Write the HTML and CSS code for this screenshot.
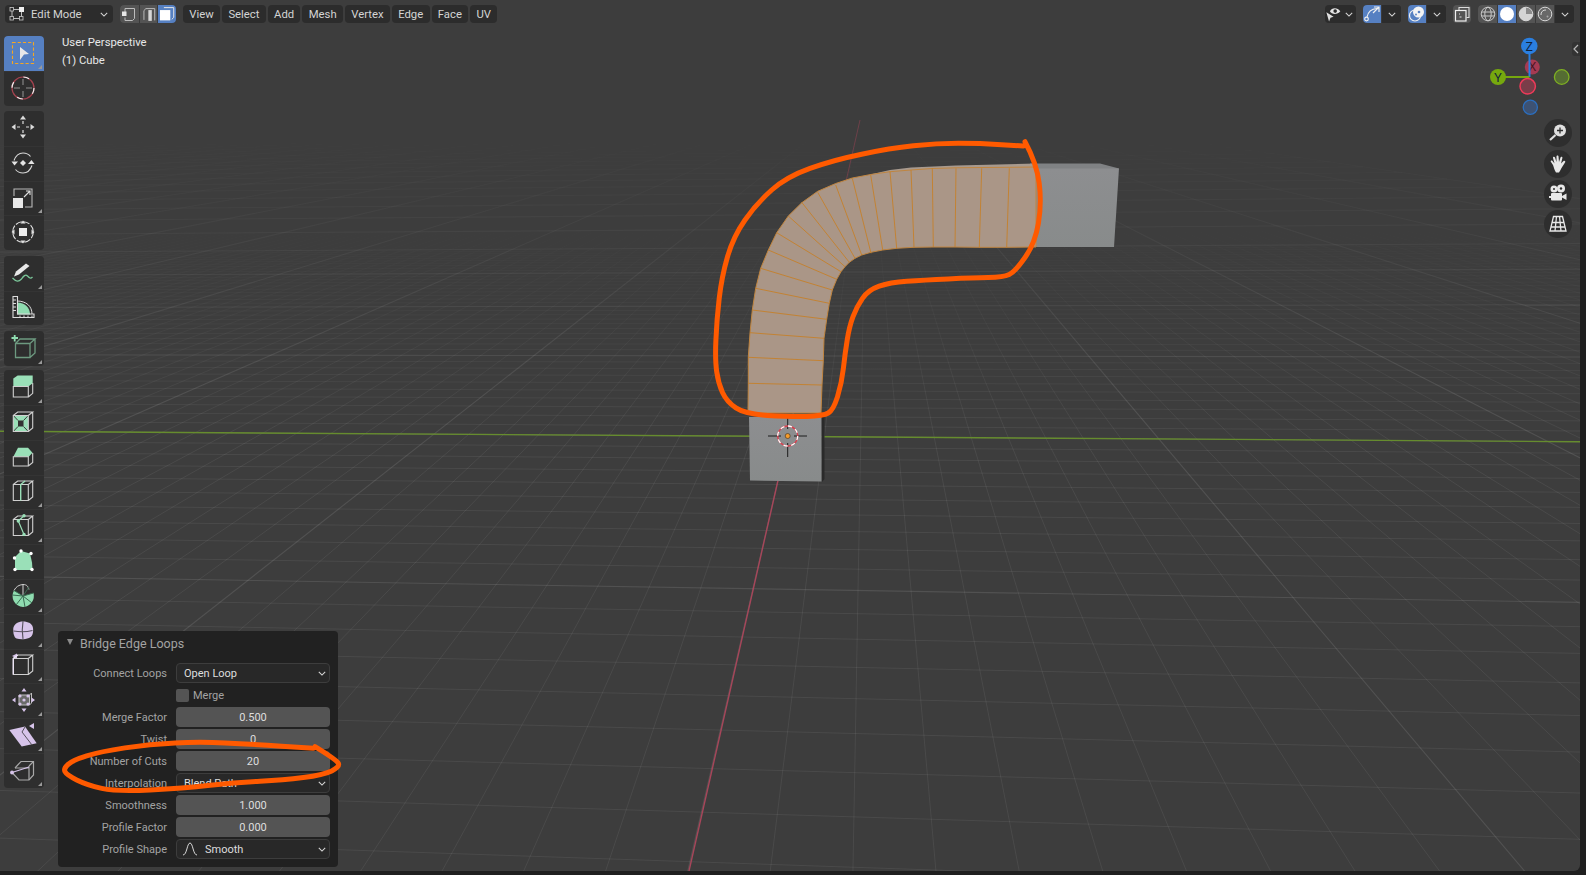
FILE: index.html
```html
<!DOCTYPE html>
<html lang="en">
<head>
<meta charset="utf-8">
<title>Bridge Edge Loops</title>
<link rel="stylesheet" href="styles.css">
</head>
<body>
<svg class="sprite" width="0" height="0" aria-hidden="true">
  <symbol id="chev" viewBox="0 0 10 6"><path d="M1 1l4 4 4-4" fill="none" stroke="#d8d8d8" stroke-width="1.3"/></symbol>
  <symbol id="cube" viewBox="0 0 24 24"><path d="M2.300 5.500h15v16h-15zM2.300 5.500L6.700 2h15l-4.400 3.500M17.300 21.500l4.400-3.500V2" fill="none" stroke="#d0d0d0" stroke-width="1.100"/></symbol>
</svg>
<main class="view">
  <svg class="scene" viewBox="0 0 1580 871" width="1580" height="871">
    <defs>
      <linearGradient id="fadeMinor" gradientUnits="userSpaceOnUse" x1="0" y1="210" x2="0" y2="440">
        <stop offset="0" stop-color="#000"/><stop offset="1" stop-color="#fff"/>
      </linearGradient>
      <linearGradient id="fadeMajor" gradientUnits="userSpaceOnUse" x1="0" y1="135" x2="0" y2="400">
        <stop offset="0" stop-color="#000"/><stop offset="1" stop-color="#fff"/>
      </linearGradient>
      <mask id="maskMinor" maskUnits="userSpaceOnUse" x="0" y="0" width="1580" height="871"><rect width="1580" height="871" fill="url(#fadeMinor)"/></mask>
      <mask id="maskMajor" maskUnits="userSpaceOnUse" x="0" y="0" width="1580" height="871"><rect width="1580" height="871" fill="url(#fadeMajor)"/></mask>
      <linearGradient id="cubeGrey" x1="0" y1="0" x2="0" y2="1"><stop offset="0" stop-color="#8d8e90"/><stop offset="1" stop-color="#888b8b"/></linearGradient>
    </defs>
    <g id="gridMinor" class="grid-minor" mask="url(#maskMinor)"></g>
    <g id="gridMajor" class="grid-major" mask="url(#maskMajor)"></g>
    <line class="axis-green" x1="0" y1="431.250" x2="1580" y2="441.700"/>
    <line class="axis-red-far" x1="787" y1="440" x2="860" y2="120"/>
    <line class="axis-red" x1="689" y1="871" x2="787" y2="441"/>

    <path class="cube-shadow" d="M821 417h3.500v62l-2.500 3z"/>
    <path class="cube-face" d="M749 417h72.500v64.500l-71.500-1z"/>
    <path class="cube-top" d="M1030 163.500h70l19 5-1 1h-88z"/>
    <path class="cube-face" d="M1034 168.500h85l-5 78.500h-80z"/>

    <path class="band-top" d="M870 174.500L890 170 911 167.500 956 165.500 1036 163.500 1036 169 1009 168 956 169 911 171 871 176z"/>
    <path class="band" d="M748 413L748.300 383 748.300 357 750 333 752.300 310 755.700 288.300 760.700 268.300 768.300 250 776.700 232.700 788.300 216 801.700 202.800 817.700 191.300 835.700 183.500 852.300 178 870.700 174.500 890 171.700 911 170 932 168.500 956 167.800 982 167.500 1009 167.300 1036 167 1036 247 1007 247.300 979 247.300 955 247 933 247 914 247.300 896.700 248.300 882.700 250 871 252.300 861.700 255 855 258.300 849.300 262.300 845 266.700 841 271.700 836.700 279.300 832.300 290 829.300 303.300 826.700 319.300 824 338.300 823.300 360.700 822 385 821 413Z"/>
    <path class="ribs" d="M748.300 383.300L822 385M748.300 357.300L823.300 360.700M750 332.700L824 338.300M752.300 310L826.700 319.300M755.700 288.300L829.300 303.300M760.700 268.300L832.300 290M768.300 250L836.700 279.300M776.700 232.700L841 271.700M788.300 216L845 266.700M801.700 202.300L849.300 262.300M817.700 192.300L855 258.300M835.700 185L861.700 255M852.300 178.300L871 253.300M870.700 175L882.700 250M890 171.700L896.700 248.300M911 170L914 247.300M932.300 168.300L933.300 247M956 168.300L955 247M981.700 168.300L979.300 247.300M1009.300 168.300L1006.700 247.300"/>

    <g class="cursor3d">
      <path class="cross" d="M768 436h13M794 436h13M787.700 415v14M787.700 443v14"/>
      <circle class="ring-red" cx="787.700" cy="436" r="10"/>
      <circle class="ring-white" cx="787.700" cy="436" r="10"/>
      <circle class="origin-dot" cx="787.700" cy="436" r="2.500"/>
    </g>
    <path class="ink" d="M1025 141.700Q1036.700 163.300 1039.200 183.300Q1041.700 203.300 1038.400 223.300Q1035 243.300 1025 257.500Q1015 271.700 1009.200 274.500Q1003.300 277.300 988.300 277.500Q973.300 277.700 948.300 278.900Q923.300 280 906.700 281.200Q890 282.300 879.200 286.200Q868.300 290 862.500 298.400Q856.700 306.700 853 316.700Q849.300 326.700 847.200 340Q845 353.300 843.400 368.300Q841.700 383.300 837.500 396.700Q833.300 410 828.300 413Q823.300 416 806.700 416.400Q790 416.700 767.500 415.400Q745 414 735.900 407.900Q726.700 401.700 722.500 392.500Q718.300 383.300 716.700 371.700Q715 360 715.900 340Q716.700 320 719.200 298.400Q721.700 276.700 727.500 256.700Q733.300 236.700 745 220Q756.700 203.300 771.700 190Q786.700 176.700 810 168.400Q833.300 160 861.700 154.200Q890 148.300 913.400 145.800Q936.700 143.300 958.400 143.300Q980 143.300 1001.700 144.700L1023.300 146"/>
  </svg>

  <div class="ui">
    <header class="topbar">
      <div class="btn mode">
        <svg class="ic" viewBox="0 0 16 16" width="16" height="16"><path d="M3 3.500h7M3 3.500v9M3 12.500h9M12.500 6v6" fill="none" stroke="#bdbdbd"/><rect x="1" y="1.500" width="3.500" height="3.500" fill="#2c2c2c" stroke="#c8c8c8" stroke-width=".8"/><rect x="1" y="10.500" width="3.500" height="3.500" fill="#2c2c2c" stroke="#c8c8c8" stroke-width=".8"/><rect x="10.500" y="10.500" width="3.500" height="3.500" fill="#2c2c2c" stroke="#c8c8c8" stroke-width=".8"/><rect x="10" y="1" width="5" height="5" fill="#efefef"/></svg>
        <span class="mode-label">Edit Mode</span>
        <svg class="chev" width="8" height="5"><use href="#chev"/></svg>
      </div>
      <div class="seg selmode">
        <span class="seg-i grey"><svg viewBox="0 0 18 18" width="18" height="18"><path d="M5 3.500h9.500v10l-2 2H5v-3M5 7V3.500" fill="none" stroke="#bdbdbd"/><rect x="2" y="6.500" width="4.500" height="4.500" fill="#e8e8e8"/></svg></span>
        <span class="seg-i grey"><svg viewBox="0 0 18 18" width="18" height="18"><path d="M4 15V5.500l2-2h9v12" fill="none" stroke="#bdbdbd"/><rect x="8.500" y="5" width="3.500" height="11" fill="#d8d8d8"/></svg></span>
        <span class="seg-i blue"><svg viewBox="0 0 18 18" width="18" height="18"><path d="M6 2.500h10v10l-2 2" fill="none" stroke="#e8e8e8"/><rect x="2" y="5" width="10.500" height="10.500" fill="#fff"/></svg></span>
      </div>
      <nav class="menus">
        <span class="btn menu">View</span><span class="btn menu">Select</span><span class="btn menu">Add</span><span class="btn menu">Mesh</span><span class="btn menu">Vertex</span><span class="btn menu">Edge</span><span class="btn menu">Face</span><span class="btn menu">UV</span>
      </nav>
      <div class="right-tools">
        <div class="seg dark w31">
          <span class="seg-i w18"><svg viewBox="0 0 20 18" width="20" height="18"><path d="M5.500 6C7.500 1.500 14 1.500 17 6 14 10 7.500 10 5.500 6z" fill="#e4e4e4"/><circle cx="11.300" cy="5.800" r="2" fill="#2c2c2c"/><path d="M1.500 7l8 5-3.400 1.200-1.600 4z" fill="#e0e0e0"/></svg></span>
          <svg class="chev" width="8" height="5"><use href="#chev"/></svg>
        </div>
        <div class="seg">
          <span class="seg-i blue w18"><svg viewBox="0 0 18 18" width="18" height="18"><path d="M4 12C5 7 8 4 14 3.500" fill="none" stroke="#f0f0f0" stroke-width="1.200"/><path d="M11 2h5v5M15.500 2.500L10 8" fill="none" stroke="#f0f0f0" stroke-width="1.200"/><circle cx="3.500" cy="14" r="1.800" fill="none" stroke="#f0f0f0" stroke-width="1.200"/></svg></span>
          <span class="seg-i caret"><svg class="chev" width="8" height="5"><use href="#chev"/></svg></span>
        </div>
        <div class="seg">
          <span class="seg-i blue w18"><svg viewBox="0 0 18 18" width="18" height="18"><circle cx="7" cy="10.500" r="5.500" fill="none" stroke="#f0f0f0" stroke-width="1.200"/><circle cx="10.500" cy="7" r="5.500" fill="#f4f4f4"/><circle cx="11" cy="7" r="1.300" fill="#5680c2"/><circle cx="8" cy="9.500" r=".9" fill="#5680c2"/></svg></span>
          <span class="seg-i caret"><svg class="chev" width="8" height="5"><use href="#chev"/></svg></span>
        </div>
        <div class="seg">
          <span class="seg-i grey w18"><svg viewBox="0 0 18 18" width="18" height="18"><path d="M6 5V2.500h10v10h-2.500" fill="none" stroke="#dcdcdc" stroke-width="1.100"/><rect x="2.500" y="5.500" width="10.500" height="10.500" fill="none" stroke="#f0f0f0" stroke-width="1.200"/><path d="M6.500 8.500v1M6.500 12h2" stroke="#e0e0e0"/></svg></span>
        </div>
        <div class="seg">
          <span class="seg-i grey w19"><svg viewBox="0 0 18 18" width="18" height="18"><g fill="none" stroke="#c8c8c8"><circle cx="9" cy="9" r="6.800"/><ellipse cx="9" cy="9" rx="3.200" ry="6.800"/><path d="M2.500 7h13M2.500 11h13"/></g></svg></span>
          <span class="seg-i blue w19"><svg viewBox="0 0 18 18" width="18" height="18"><circle cx="9" cy="9" r="7" fill="#fff"/></svg></span>
          <span class="seg-i grey w19"><svg viewBox="0 0 18 18" width="18" height="18"><circle cx="9" cy="9" r="6.800" fill="#8a8a8a" stroke="#d8d8d8"/><path d="M9 2.200V9h6.800A6.800 6.800 0 0 1 9 15.800 6.800 6.800 0 0 1 9 2.200z" fill="#d4d4d4"/></svg></span>
          <span class="seg-i grey w19"><svg viewBox="0 0 18 18" width="18" height="18"><circle cx="9" cy="9" r="6.800" fill="#686868" stroke="#d8d8d8"/><path d="M5 10A4.500 4.500 0 0 1 10 5" fill="none" stroke="#d8d8d8"/><circle cx="11.500" cy="11.500" r="1" fill="#a8a8a8"/></svg></span>
          <span class="seg-i caret"><svg class="chev" width="8" height="5"><use href="#chev"/></svg></span>
        </div>
      </div>
    </header>

    <div class="stage">
      <aside class="toolbar">
        <div class="group">
          <div class="tool active corner"><svg viewBox="0 0 24 24" width="24" height="24"><rect x="1.500" y="1.500" width="21" height="21" fill="none" stroke="#f5a623" stroke-width="1.100" stroke-dasharray="3.200 2"/><path d="M9 6l9 7-5 .5L9 19z" fill="#e8e8e8"/></svg></div>
          <div class="tool"><svg viewBox="0 0 24 24" width="24" height="24"><circle cx="12" cy="12" r="11" fill="none" stroke="#a5424f" stroke-width="1.200"/><circle cx="12" cy="12" r="11" fill="none" stroke="#efefef" stroke-width="1.200" stroke-dasharray="6 11.300"/><path d="M3 12h6M15 12h6M12 3v6M12 15v6" stroke="#8c8c8c" stroke-width="1.100"/></svg></div>
        </div>
        <div class="group">
          <div class="tool"><svg viewBox="0 0 24 24" width="24" height="24"><path d="M12 .500l3 4h-6zM12 23.500l-3-4h6zM.500 12l4-3v6zM23.500 12l-4-3v6z" fill="#dcdcdc"/><path d="M12 6v3M12 15v3M6 12h3M15 12h3" stroke="#dcdcdc" stroke-width="1.200"/></svg></div>
          <div class="tool"><svg viewBox="0 0 24 24" width="24" height="24"><path d="M3 9.500C5 4 9 2 12 2c3 0 5.500 1 7.500 3.500M21 14.500C19 20 15 22 12 22c-3 0-5.500-1-7.500-3.500" fill="none" stroke="#d8d8d8" stroke-width="1.100"/><path d="M.500 10.500h6.500L3.500 14.500zM23.500 13h-6.500L20.500 9z" fill="#e4e4e4"/><path d="M12 9l3 3-3 3-3-3z" fill="#e4e4e4"/></svg></div>
          <div class="tool corner"><svg viewBox="0 0 24 24" width="24" height="24"><path d="M3 10V3h18v18h-7" fill="none" stroke="#b8b8b8" stroke-width="1.100"/><rect x="2" y="12" width="10" height="10" fill="#e8e8e8"/><path d="M13 11l6-6M15 5h4v4" fill="none" stroke="#e0e0e0" stroke-width="1.100"/></svg></div>
          <div class="tool"><svg viewBox="0 0 24 24" width="24" height="24"><circle cx="12" cy="12" r="10.300" fill="none" stroke="#e0e0e0" stroke-width="1.100" stroke-dasharray="6.500 1.600"/><rect x="8" y="8" width="8" height="8" fill="#ececec"/><path d="M12 .500l2.500 3h-5zM12 23.500l-2.500-3h5zM.500 12l3-2.500v5zM23.500 12l-3-2.500v5z" fill="#e0e0e0"/></svg></div>
        </div>
        <div class="group">
          <div class="tool corner"><svg viewBox="0 0 24 24" width="24" height="24"><path d="M15 3.500L5 11.500l-2 5 5-2L18.500 6z" fill="#e8e8e8"/><path d="M1.500 18c4 4 6 4 9 1 2-3 4-5 6-3s3 3 5 1" fill="none" stroke="#7bc79a" stroke-width="1.300"/></svg></div>
          <div class="tool"><svg viewBox="0 0 24 24" width="24" height="24"><path d="M6 19.500V7.500c8 0 13 5 13 12z" fill="#8fdcb0"/><path d="M6 6c9 0 15 5 15 13" fill="none" stroke="#dcdcdc"/><path d="M2 1.500h4.500v17.500H23v3.500H2z" fill="none" stroke="#dcdcdc" stroke-width="1.100"/><path d="M2 5h3M2 8.500h3M2 12h3M2 15.500h3M9 22.500v-2M13 22.500v-2M17 22.500v-2M21 22.500v-2" stroke="#dcdcdc"/></svg></div>
        </div>
        <div class="group">
          <div class="tool corner"><svg viewBox="0 0 24 24" width="24" height="24"><path d="M.500 3h6.500M3.700 0v6.500" stroke="#8fdcb0" stroke-width="1.800"/><path d="M4.500 8.500H19v14H4.500zM4.500 8.500L9 4h15L19 8.500M19 22.500l5-4.500V4" fill="none" stroke="#6d9a80" stroke-width="1.300"/></svg></div>
        </div>
        <div class="group main">
          <div class="tool corner"><svg viewBox="0 0 24 24" width="24" height="24"><path d="M2.300 3.500L6.700.500h15v7.700l-4.400 3.300h-15z" fill="#9ae0b8"/><path d="M2.300 11.500h15v10.500h-15zM17.300 22l4.400-3.700V8" fill="none" stroke="#d0d0d0" stroke-width="1.100"/></svg></div>
          <div class="tool"><svg viewBox="0 0 24 24" width="24" height="24"><path d="M2.300 5.500h15v16h-15z" fill="#9ae0b8"/><rect x="7" y="10.500" width="5.500" height="6" fill="#333"/><path d="M2.300 5.500L7 10.500M17.300 5.500l-4.800 5M2.300 21.500L7 16.500M17.300 21.500l-4.800-5" stroke="#3b3b3b"/><use href="#cube"/></svg></div>
          <div class="tool"><svg viewBox="0 0 24 24" width="24" height="24"><path d="M2.300 11.700L7 2.700h10l4.500 5-4 4.300-2-.3z" fill="#9ae0b8"/><path d="M2.300 11.700h15V21h-15zM17.300 21l4.400-3.500V8" fill="none" stroke="#d0d0d0" stroke-width="1.100"/></svg></div>
          <div class="tool corner"><svg viewBox="0 0 24 24" width="24" height="24"><use href="#cube"/><path d="M9.700 21.500V5.500l4.400-3.500" fill="none" stroke="#9ae0b8" stroke-width="1.400"/></svg></div>
          <div class="tool corner"><svg viewBox="0 0 24 24" width="24" height="24"><use href="#cube"/><path d="M13 1.700L7.300 7 13 20.400" fill="none" stroke="#9ae0b8" stroke-width="1.200"/><circle cx="13" cy="1.700" r="1.700" fill="#9ae0b8"/><circle cx="7.300" cy="7" r="1.700" fill="#9ae0b8"/><circle cx="13" cy="20.400" r="1.700" fill="#9ae0b8"/></svg></div>
          <div class="tool"><svg viewBox="0 0 24 24" width="24" height="24"><path d="M4 8L10 2l9 2.500 2 9 .5 7.500H4z" fill="#9ae0b8"/><g fill="#fff"><circle cx="10" cy="2" r="1.700"/><circle cx="20" cy="4.500" r="1.700"/><circle cx="3.500" cy="9" r="1.700"/><circle cx="4" cy="20.500" r="1.700"/><circle cx="21" cy="20.500" r="1.700"/></g></svg></div>
          <div class="tool corner"><svg viewBox="0 0 24 24" width="24" height="24"><path d="M12 12L3 6.500A11 11 0 0 0 12 23a11 11 0 0 0 10.500-14z" fill="#8fdcb0"/><path d="M12 12L12 .500A11 11 0 0 0 3 6.500M12 .500c4 0 5 2 6 5" fill="none" stroke="#d0d0d0"/><path d="M12 12L1 11M12 12L5 21M12 12l2 11M12 12l9 7M12 12L3 6.500M12 12L18 3M12 12l10.500-3" stroke="#3b6b52"/></svg></div>
          <div class="tool corner"><svg viewBox="0 0 24 24" width="24" height="24"><path d="M2.300 9C3 5 7 2.400 12 2.400s9.500 2 10 6.600c.5 5-.5 8.500-4 10-4 1.500-9 1.600-12.500.5C3 18.500 2 14 2.300 9z" fill="#d7c4ea"/><path d="M2.500 12c6 1 13 1 19-.500M12 2.400c-1 6-1 12 0 17.500" fill="none" stroke="#55505c" stroke-width="1.100"/></svg></div>
          <div class="tool corner"><svg viewBox="0 0 24 24" width="24" height="24"><use href="#cube"/><path d="M1 3l5-2.500v5z" fill="#d7c4ea"/><path d="M6.700 2L2.300 5.500v16" fill="none" stroke="#efe6f8" stroke-width="1.300"/></svg></div>
          <div class="tool corner"><svg viewBox="0 0 24 24" width="24" height="24"><path d="M8 7h10.500v10H8z" fill="#6a6a6a" stroke="#bdbdbd"/><path d="M18.500 7l2-2v10l-2 2" fill="none" stroke="#bdbdbd"/><path d="M13 0l2.500 3.500h-5zM13 24l-2.500-3.500h5zM1 12l3.500-2.500v5zM24 12l-3.500-2.500v5z" fill="#d7c4ea"/><circle cx="9" cy="8" r="1.600" fill="#d7c4ea"/><circle cx="9" cy="16" r="1.600" fill="#d7c4ea"/><circle cx="17" cy="8" r="1.600" fill="#d7c4ea"/><circle cx="17" cy="16" r="1.600" fill="#d7c4ea"/><circle cx="13" cy="12" r="1.600" fill="#d7c4ea"/></svg></div>
          <div class="tool corner"><svg viewBox="0 0 24 24" width="24" height="24"><path d="M-1.700 7L14 3.600 25.700 20.300 10.700 23.600z" fill="#d7c4ea"/><path d="M14 4l-3 5 10 13" fill="none" stroke="#55505c" stroke-width="1"/><path d="M18 3l5-3v6z" fill="#d7c4ea"/></svg></div>
          <div class="tool corner"><svg viewBox="0 0 24 24" width="24" height="24"><path d="M4 10L10 3.500h12.500V17L18 22H8L1 14.500" fill="none" stroke="#a8a8a8" stroke-width="1.200"/><path d="M18 8v14M18 8l4.500-4.500M4 10h14" stroke="#a8a8a8" stroke-width="1.200"/><path d="M1 14.500l17-5.500" stroke="#d7c4ea" stroke-width="1.200"/><circle cx="1" cy="14.500" r="1.900" fill="#d7c4ea"/></svg></div>
        </div>
      </aside>
      <div class="info">
        <p class="info-line">User Perspective</p>
        <p class="info-line">(1) Cube</p>
      </div>
      <div class="navi">
        <svg class="gizmo" viewBox="0 0 82 82" width="82" height="82">
          <circle class="g-x-back" cx="42.300" cy="31" r="7.500"/>
          <text class="g-t dark-red" x="42.300" y="35">X</text>
          <path class="g-line-z" d="M39.500 10v31"/>
          <path class="g-line-y" d="M8 41h31.500"/>
          <circle class="g-z" cx="39.300" cy="10" r="8.300"/>
          <text class="g-t" x="39.300" y="14.500">Z</text>
          <circle class="g-y" cx="8" cy="41" r="8"/>
          <text class="g-t" x="8" y="45.500">Y</text>
          <circle class="g-x-front" cx="37.700" cy="50.300" r="7.700"/>
          <circle class="g-y-neg" cx="71.700" cy="41" r="7.300"/>
          <circle class="g-z-neg" cx="40.300" cy="71.300" r="7.100"/>
        </svg>
        <div class="nav-btn"><svg viewBox="0 0 20 20" width="20" height="20"><circle cx="12" cy="7.500" r="6" fill="#e0e0e0"/><path d="M12 4.500v6M9 7.500h6" stroke="#2e2e2e" stroke-width="1.300"/><path d="M7.500 12L2 17" stroke="#e0e0e0" stroke-width="2.200"/></svg></div>
        <div class="nav-btn"><svg viewBox="0 0 20 20" width="20" height="20"><path d="M5 11L3 8c-1-1 .5-2 1.500-1L6.500 9.500 5 4c-.3-1.200 1.500-1.700 2-.5L8.500 8 8.500 2.500c0-1.300 2-1.300 2 0L11 8l1.500-4.500c.4-1.200 2.200-.7 1.900.5L13 9.500l2.500-2.500c1-1 2.400.3 1.500 1.400L13.500 14c-1 2-2 4-2.500 4.500H8C6.500 16 6 14 5 11z" fill="#e8e8e8"/></svg></div>
        <div class="nav-btn"><svg viewBox="0 0 20 20" width="20" height="20"><circle cx="6" cy="5" r="3.500" fill="#e8e8e8"/><circle cx="13" cy="4.500" r="4" fill="#e8e8e8"/><circle cx="6" cy="5" r="1" fill="#2e2e2e"/><circle cx="13" cy="4.500" r="1.200" fill="#2e2e2e"/><rect x="3" y="9" width="11" height="7.500" rx="1" fill="#e8e8e8"/><path d="M14 12l4.500-2.500v6.500L14 13.500zM1 12h2v2H1z" fill="#e8e8e8"/></svg></div>
        <div class="nav-btn"><svg viewBox="0 0 20 20" width="20" height="20"><path d="M5.500 2.500h9l3.500 14.500H2zM3.800 8.500h12.400M2.800 13h14.400M8.500 2.500L7 17M11.500 2.500L13 17" fill="none" stroke="#e8e8e8" stroke-width="1.300"/></svg></div>
      </div>
      <div class="side-tab"><svg viewBox="0 0 8 10" width="8" height="10"><path d="M6 1L2 5l4 4" fill="none" stroke="#b8b8b8" stroke-width="1.200"/></svg></div>
    </div>

    <section class="op-panel">
      <h2 class="op-title"><span class="tri"></span>Bridge Edge Loops</h2>
      <div class="row"><span class="lbl">Connect Loops</span><div class="field drop"><span>Open Loop</span><svg class="chev" width="8" height="5"><use href="#chev"/></svg></div></div>
      <div class="row"><span></span><div class="check"><span class="box"></span><span class="lbl">Merge</span></div></div>
      <div class="row"><span class="lbl">Merge Factor</span><div class="field num">0.500</div></div>
      <div class="row"><span class="lbl">Twist</span><div class="field num">0</div></div>
      <div class="row"><span class="lbl">Number of Cuts</span><div class="field num">20</div></div>
      <div class="row"><span class="lbl">Interpolation</span><div class="field drop"><span>Blend Path</span><svg class="chev" width="8" height="5"><use href="#chev"/></svg></div></div>
      <div class="row"><span class="lbl">Smoothness</span><div class="field num">1.000</div></div>
      <div class="row"><span class="lbl">Profile Factor</span><div class="field num">0.000</div></div>
      <div class="row"><span class="lbl">Profile Shape</span><div class="field drop"><span class="with-ic"><svg viewBox="0 0 16 14" width="16" height="14"><path d="M1 13C5 13 5 1 8 1s3 12 7 12" fill="none" stroke="#d8d8d8"/></svg>Smooth</span><svg class="chev" width="8" height="5"><use href="#chev"/></svg></div></div>
    </section>

    <svg class="annot" viewBox="0 0 1580 871" width="1580" height="871">
      <path class="ink" d="M315 746.700Q336.700 760 338.400 763.400Q340 766.700 331.700 770.900Q323.300 775 303.300 777.500Q283.300 780 260 781.200Q236.700 782.300 210 785.300Q183.300 788.300 150 790Q116.700 791.700 101.700 788.400Q86.700 785 76.700 780Q66.700 775 65 771.700Q63.300 768.300 68.300 764.200Q73.300 760 86.700 755.900Q100 751.700 125 747.900Q150 744 175 742.900Q200 741.700 225 742.900Q250 744 281.700 746.200L313.300 748.300"/>
    </svg>
  </div>
</main>
<script src="script.js"></script>
</body>
</html>
```
FILE: styles.css
```css
* { box-sizing: border-box; }
html, body { margin: 0; height: 100%; }
body {
  background: #1f1f1f;
  font-family: Roboto, "Noto Sans", sans-serif;
  font-size: 12px;
  overflow: hidden;
}
.sprite { position: absolute; }
.view {
  position: relative;
  width: 1580px;
  height: 871px;
  background: #3d3d3d;
  border-radius: 0 0 6px 0;
  overflow: hidden;
}
.scene { position: absolute; inset: 0; }
.annot { position: absolute; inset: 0; pointer-events: none; }
.grid-minor line { stroke: #fff; stroke-opacity: .065; stroke-width: 1; }
.grid-major line { stroke: #fff; stroke-opacity: .105; stroke-width: 1.100; }
.axis-green { stroke: #668c2e; stroke-width: 1.400; }
.axis-red { stroke: #a8465a; stroke-width: 1.400; }
.axis-red-far { stroke: #6d4049; stroke-width: 1; }
.cube-face { fill: url(#cubeGrey); }
.cube-top { fill: #808284; }
.cube-shadow { fill: #2a2a2a; }
.band-top { fill: #a89a8e; }
.band { fill: #aa9687; stroke: #c08540; stroke-width: 1; }
.ribs { fill: none; stroke: #c5802a; stroke-width: .9; }
.cross { stroke: #1c1c1c; stroke-width: 1; fill: none; }
.ring-red { fill: none; stroke: #d8414f; stroke-width: 1.300; }
.ring-white { fill: none; stroke: #fff; stroke-width: 1.300; stroke-dasharray: 4.200 3.650; }
.origin-dot { fill: #f59c2c; stroke: #3a2a14; stroke-width: .6; }
.ink { fill: none; stroke: #ff5a00; stroke-width: 5; stroke-linecap: round; stroke-linejoin: round; }

.ui { position: absolute; inset: 0; display: flex; flex-direction: column; }
.topbar { display: flex; align-items: center; gap: 7px; height: 28px; padding: 5px 6px 5px 5px; }
.btn {
  height: 18px;
  display: flex;
  align-items: center;
  background: #2c2c2c;
  border-radius: 4px;
  color: #d4d4d4;
  font-size: 11.300px;
}
.mode { width: 108px; padding: 0 5px 0 4px; }
.mode-label { margin-left: 6px; flex: 1; }
.chev { flex: none; display: block; }
.seg { display: flex; height: 18px; border-radius: 4px; overflow: hidden; background: #2c2c2c; align-items: center; }
.seg.dark { justify-content: center; }
.seg-i { display: flex; align-items: center; justify-content: center; height: 18px; width: 18.700px; flex: none; }
.seg-i + .seg-i { border-left: 1px solid #3a3a3a; }
.seg-i.grey { background: #545454; }
.seg-i.blue { background: #5680c2; }
.seg-i.w18 { width: 18px; }
.seg-i.w19 { width: 19px; }
.seg-i.caret { width: 20px; background: #2c2c2c; }
.w31 { width: 31px; padding-right: 3px; gap: 2px; }
.menus { display: flex; gap: 2px; }
.menu { padding: 0 6.300px; }
.right-tools { margin-left: auto; display: flex; gap: 7px; }

.stage { position: relative; flex: 1; display: flex; align-items: flex-start; padding: 8px 0 0 4px; }
.toolbar { width: 40px; display: flex; flex-direction: column; gap: 5.500px; flex: none; }
.group { background: #2e2e2e; border-radius: 4px; }
.group.main { margin-top: -1px; }
.tool { position: relative; height: 34.800px; display: flex; align-items: center; padding: 0 0 2px 7px; }
.tool svg { overflow: visible; }
.tool + .tool { border-top: 1px solid #343434; }
.tool.active { background: #5680c2; border-radius: 4px 4px 0 0; padding-bottom: 0; }
.tool.corner::after {
  content: "";
  position: absolute;
  right: 2px;
  bottom: 2px;
  border-style: solid;
  border-width: 0 0 4px 4px;
  border-color: transparent transparent #9a9a9a transparent;
}
.info { margin-left: 18px; color: #e8e8e8; font-size: 11.300px; }
.info-line { margin: 0; height: 18px; line-height: 14px; }
.navi { margin-left: auto; margin-right: 8px; display: flex; flex-direction: column; align-items: flex-end; gap: 2.300px; }
.gizmo { display: block; margin-bottom: -1px; }
.g-z { fill: #2a7fe0; }
.g-y { fill: #76a80e; }
.g-x-back { fill: #a63a52; }
.g-x-front { fill: #7a3d49; stroke: #ef3a59; stroke-width: 1.500; }
.g-y-neg { fill: #556c33; stroke: #7fb022; stroke-width: 1.300; }
.g-z-neg { fill: #3d5273; stroke: #2b6fc0; stroke-width: 1.300; }
.g-line-z { stroke: #2a7fe0; stroke-width: 2; }
.g-line-y { stroke: #76a80e; stroke-width: 2; }
.g-t { font-size: 13px; fill: #10233a; text-anchor: middle; font-family: "Noto Sans", sans-serif; }
.dark-red { fill: #4a1420; }
.nav-btn { width: 28px; height: 28px; border-radius: 50%; background: #2e2e2e; display: flex; align-items: center; justify-content: center; }
.side-tab {
  position: absolute;
  right: 0;
  top: 14px;
  width: 8px;
  height: 14px;
  background: #333;
  border-radius: 3px 0 0 3px;
  display: flex;
  align-items: center;
  justify-content: center;
}

.op-panel {
  position: absolute;
  left: 58px;
  bottom: 4px;
  width: 280px;
  height: 236px;
  background: #212121;
  border-radius: 4px;
}
.op-title {
  margin: 0 0 8px;
  height: 24px;
  display: flex;
  align-items: center;
  color: #a3a3a3;
  font-weight: 400;
  font-size: 12.500px;
}
.tri {
  margin: 0 7px 2px 9px;
  border-style: solid;
  border-width: 6px 3.500px 0;
  border-color: #8a8a8a transparent transparent;
}
.row { display: grid; grid-template-columns: 109px 154px; column-gap: 9px; height: 20px; margin-bottom: 2px; align-items: center; }
.lbl { color: #a3a3a3; text-align: right; font-size: 11px; }
.field { height: 20px; border-radius: 4px; display: flex; align-items: center; font-size: 11px; color: #dedede; }
.num { background: #545454; justify-content: center; }
.drop { background: #282828; border: 1px solid #3d3d3d; justify-content: space-between; padding: 0 3px 0 7px; }
.with-ic { display: flex; align-items: center; gap: 7px; margin-left: -2px; }
.check { display: flex; align-items: center; gap: 4px; }
.box { width: 13px; height: 13px; border-radius: 2px; background: #545454; }
```
FILE: script.js
```js
// Floor grid of the 3D viewport: a plane projected by two vanishing points.
(function () {
  var NS = "http://www.w3.org/2000/svg";
  var O = [788, 436.5], VX = [867, 94], VY = [-14790, 333];
  var KA = 32.5, KB = 430;

  function project(a, b) {
    var w = 1 - a / KA - b / KB;
    return [
      (O[0] - a * VX[0] / KA - b * VY[0] / KB) / w,
      (O[1] - a * VX[1] / KA - b * VY[1] / KB) / w
    ];
  }
  function add(group, p, q) {
    var l = document.createElementNS(NS, "line");
    l.setAttribute("x1", p[0]);
    l.setAttribute("y1", p[1]);
    l.setAttribute("x2", q[0]);
    l.setAttribute("y2", q[1]);
    group.appendChild(l);
  }
  var minor = document.getElementById("gridMinor");
  var major = document.getElementById("gridMajor");
  var AMIN = -300, AMAX = 25, BMIN = -800, BMAX = 60;
  var i;
  for (i = -40; i <= 25; i++) {
    add(i % 10 === 0 ? major : minor, project(i, BMIN), project(i, BMAX));
  }
  for (i = AMIN; i < -40; i += 10) {
    add(major, project(i, BMIN), project(i, BMAX));
  }
  for (i = -150; i <= 60; i++) {
    add(i % 10 === 0 ? major : minor, project(AMIN, i), project(AMAX, i));
  }
  for (i = BMIN; i < -150; i += 10) {
    add(major, project(AMIN, i), project(AMAX, i));
  }
})();
```
